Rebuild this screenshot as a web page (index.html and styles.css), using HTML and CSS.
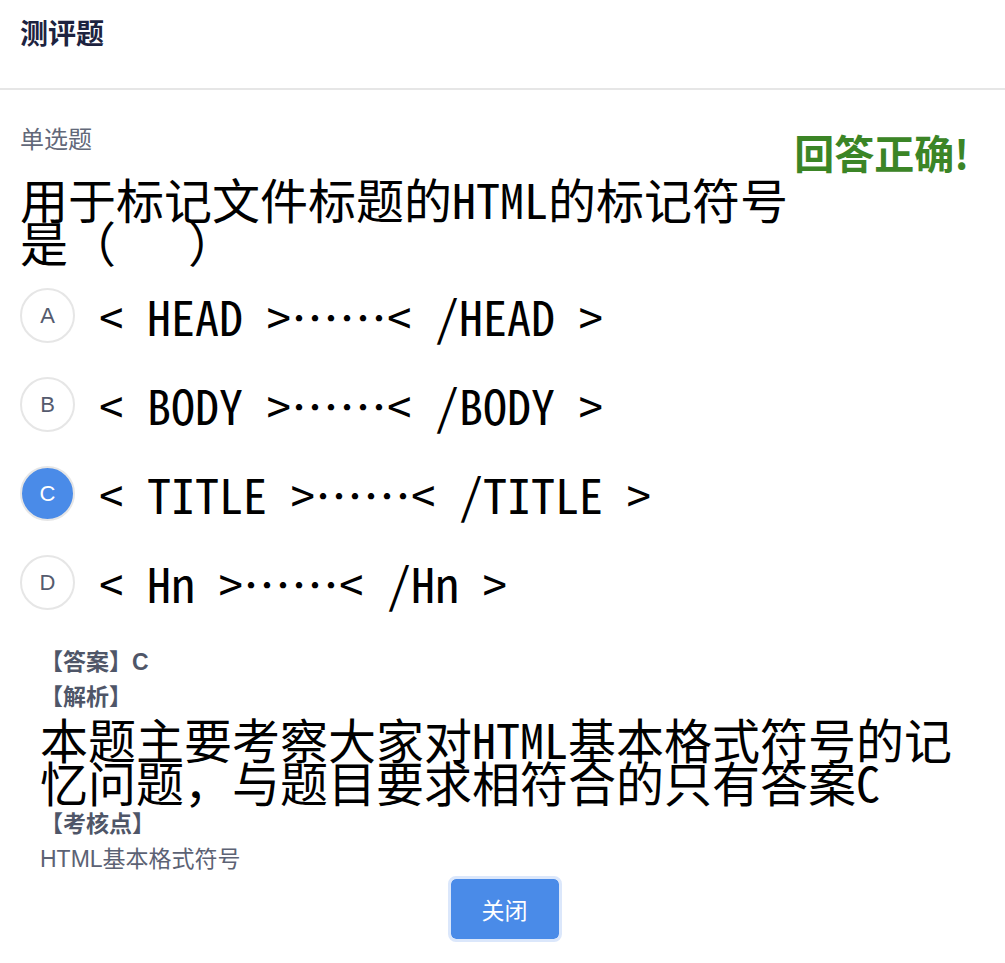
FILE: index.html
```html
<!DOCTYPE html>
<html lang="zh-CN">

    <head>
        <meta charset="UTF-8">
        <meta name="viewport"
            content="width=device-width,initial-scale=1.0">
        <title>测评题</title>
        <link rel="stylesheet" href="styles.css">
    </head>

    <body>
        <div class="header">测评题</div>
        <div class="main">
            <div class="top">
                <div class="question">
                    <div class="type">单选题</div>
                    <div class="stem">用于标记文件标题的HTML的标记符号是（&nbsp;&nbsp;&nbsp;）</div>
                </div>
                <div class="result">回答正确!</div>
            </div>
            <div class="options">
                <div class="option">
                    <span class="letter">A</span>
                    <span class="text">&lt; HEAD &gt;……&lt; /HEAD &gt;</span>
                </div>
                <div class="option">
                    <span class="letter">B</span>
                    <span class="text">&lt; BODY &gt;……&lt; /BODY &gt;</span>
                </div>
                <div class="option">
                    <span class="letter active">C</span>
                    <span class="text">&lt; TITLE &gt;……&lt; /TITLE &gt;</span>
                </div>
                <div class="option">
                    <span class="letter">D</span>
                    <span class="text">&lt; Hn &gt;……&lt; /Hn &gt;</span>
                </div>
            </div>
            <div class="analysis">
                <div class="label">【答案】C</div>
                <div class="label">【解析】</div>
                <div class="explain">本题主要考察大家对HTML基本格式符号的记忆问题，与题目要求相符合的只有答案C</div>
                <div class="label point">【考核点】</div>
                <div class="point-text">HTML基本格式符号</div>
            </div>
            <div class="footer">
                <button class="close">关闭</button>
            </div>
        </div>
    </body>

</html>
```

FILE: styles.css
```css
* {
    margin: 0;
    padding: 0;
    box-sizing: border-box;
}

body {
    background-color: #fff;
    font-family: "Liberation Sans", "Noto Sans CJK SC", sans-serif;
    color: #222;
}

.header {
    padding: 16px 20px 34px;
    line-height: 38px;
    font-size: 28px;
    font-weight: bold;
    color: #1d2340;
    border-bottom: 2px solid #e6e6e6;
}

.main {
    padding: 0 30px 0 20px;
}

.top {
    display: flex;
    margin-top: 36px;
}

.question {
    flex: 1;
    min-width: 0;
}

.type {
    font-size: 24px;
    line-height: 28px;
    color: #626879;
}

/* 题干和选项用等宽的中文字体 */
.stem,
.option .text,
.explain {
    font-family: "Noto Sans Mono CJK SC", "Noto Sans CJK SC", monospace;
    font-size: 48px;
    line-height: 43px;
    color: #000;
}

.stem {
    margin-top: 23px;
    padding-right: 6px;
}

.result {
    flex: none;
    margin: 2px 6px 0 0;
    font-size: 40px;
    line-height: 48px;
    font-weight: bold;
    color: #3b8526;
    font-family: "Noto Sans CJK SC", sans-serif;
}

.options {
    margin-top: 8px;
}

.option {
    display: flex;
    align-items: center;
    gap: 24px;
    height: 89px;
}

.letter {
    flex: none;
    width: 55px;
    height: 55px;
    border-radius: 50%;
    border: 2px solid #e6e6e6;
    display: flex;
    justify-content: center;
    align-items: center;
    font-size: 22px;
    color: #555b6e;
}

.letter.active {
    background: #4a8be8;
    color: #fff;
}

.option .text {
    white-space: nowrap;
}

.analysis {
    margin-top: 18px;
    padding-left: 20px;
}

.label {
    font-size: 23px;
    line-height: 35px;
    font-weight: bold;
    color: #4f5668;
}

.explain {
    margin-top: 2px;
}

.label.point {
    margin-top: 4px;
}

.point-text {
    font-size: 23px;
    line-height: 34px;
    color: #5c6274;
}

.footer {
    display: flex;
    justify-content: center;
    padding: 0 0 20px 14px;
}

.close {
    width: 114px;
    height: 66px;
    border: 3px solid #dbe7fb;
    border-radius: 8px;
    background: #4a8be8;
    background-clip: padding-box;
    color: #fff;
    font-size: 23px;
    font-family: "Noto Sans CJK SC", sans-serif;
    cursor: pointer;
}
```
